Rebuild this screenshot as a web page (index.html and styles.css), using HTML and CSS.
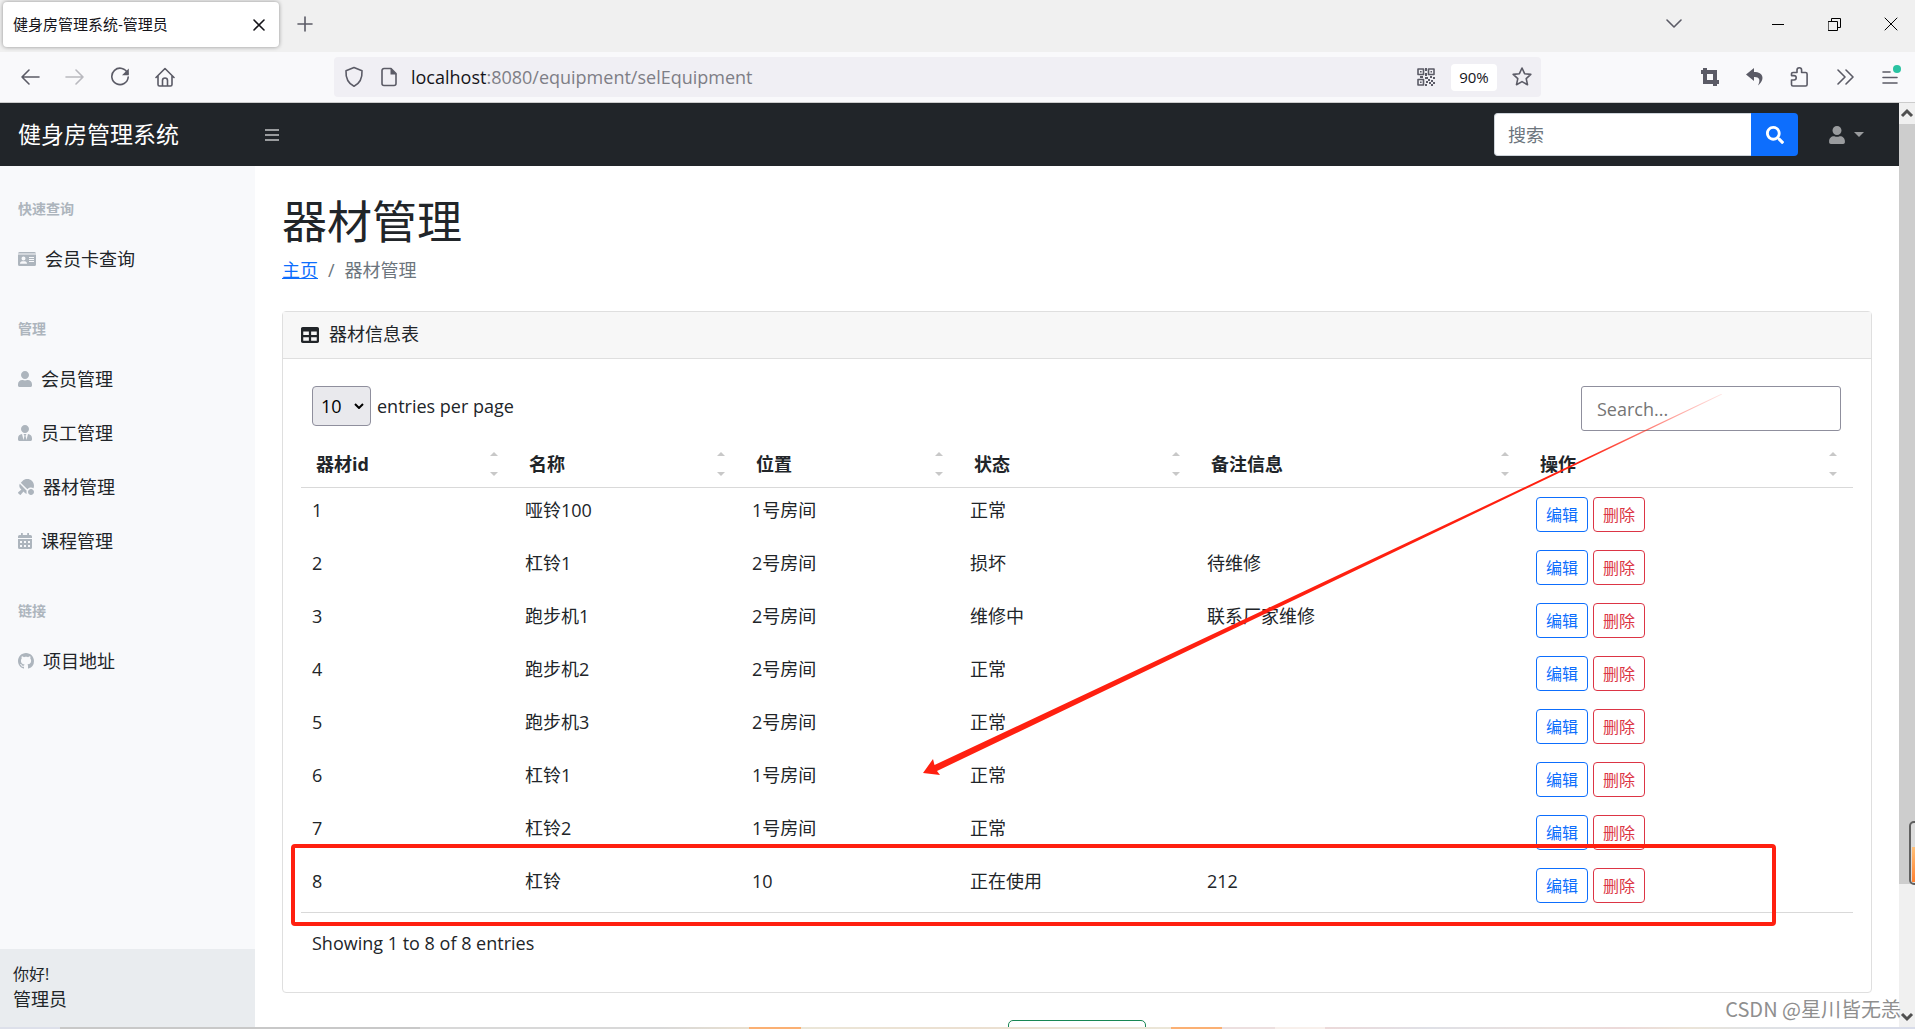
FILE: index.html
```html
<!DOCTYPE html>
<html lang="zh-CN">
<head>
<meta charset="utf-8">
<meta name="viewport" content="width=device-width, initial-scale=1">
<title>健身房管理系统-管理员</title>
<link rel="stylesheet" href="styles.css">
</head>
<body>
<svg class="defs" aria-hidden="true">
  <symbol id="i-user" viewBox="0 0 448 512"><path d="M224 256c70.7 0 128-57.3 128-128S294.7 0 224 0 96 57.3 96 128s57.3 128 128 128zm89.6 32h-16.7c-22.2 10.2-46.9 16-72.9 16s-50.6-5.8-72.9-16h-16.7C60.2 288 0 348.2 0 422.4V464c0 26.500 21.500 48 48 48h352c26.500 0 48-21.500 48-48v-41.600c0-74.200-60.200-134.400-134.400-134.400z"/></symbol>
  <symbol id="i-sort" viewBox="0 0 8 26"><path d="M0 5L4 1l4 4zM0 21l4 4 4-4z"/></symbol>
</svg>

<div class="browser">
  <header class="tabbar">
    <div class="tab"><span>健身房管理系统-管理员</span>
      <button class="tab-close" aria-label="关闭标签页"><svg width="12" height="12" viewBox="0 0 12 12"><path d="M1 1l10 10M11 1L1 11"/></svg></button>
    </div>
    <button class="new-tab" aria-label="新标签页"><svg width="16" height="16" viewBox="0 0 16 16"><path d="M8 1v14M1 8h14"/></svg></button>
    <div class="window-controls">
      <button class="tab-list" aria-label="标签列表"><svg width="16" height="10" viewBox="0 0 16 10"><path d="M1 1l7 7 7-7"/></svg></button>
      <button aria-label="最小化"><svg width="12" height="12" viewBox="0 0 12 12"><path d="M0 6.500h12"/></svg></button>
      <button aria-label="还原"><svg width="13" height="13" viewBox="0 0 13 13"><path d="M.5 3.500h9v9h-9zM3.500 3.500v-3h9v9h-3"/></svg></button>
      <button class="last" aria-label="关闭"><svg width="14" height="14" viewBox="0 0 14 14"><path d="M1 1l12 12M13 1L1 13"/></svg></button>
    </div>
  </header>

  <nav class="toolbar" aria-label="浏览器工具栏">
    <button class="tool" aria-label="后退"><svg width="20" height="20" viewBox="0 0 20 20"><path d="M19 10H2M9 3l-7 7 7 7"/></svg></button>
    <button class="tool dim" aria-label="前进"><svg width="20" height="20" viewBox="0 0 20 20"><path d="M1 10h17M11 3l7 7-7 7"/></svg></button>
    <button class="tool" aria-label="刷新"><svg width="20" height="20" viewBox="0 0 20 20"><path d="M17.700 6.500A8.200 8.200 0 1 0 18.200 10"/><path class="solid" d="M18.800 1.500v6.800H12z"/></svg></button>
    <button class="tool" aria-label="主页"><svg width="20" height="20" viewBox="0 0 20 20"><path d="M1 10.500L10 1.500l9 9M3 9v8.500a1.500 1.500 0 0 0 1.500 1.500h11a1.500 1.500 0 0 0 1.500-1.500V9M7.500 19v-5.500a2.500 2.500 0 0 1 5 0V19"/></svg></button>
    <div class="urlbar">
      <svg width="20" height="22" viewBox="0 0 20 22"><path d="M10 1.500l8 3.200c.4 6.800-1.600 12.300-8 15.600C3.600 17 1.600 11.500 2 4.700z"/></svg>
      <svg class="page-icon" width="16" height="20" viewBox="0 0 16 20"><path d="M10 1.500H3A2 2 0 0 0 1 3.500v13a2 2 0 0 0 2 2h10a2 2 0 0 0 2-2V6.500z"/><path class="solid" d="M9.500 1v6.500H15.500z"/></svg>
      <span class="url"><b>localhost</b>:8080/equipment/selEquipment</span>
      <svg class="qr" width="18" height="18" viewBox="0 0 18 18"><path d="M1 1h5.500v5.500H1zM11.500 1H17v5.500h-5.500zM1 11.500h5.500V17H1z"/><path class="solid" d="M3 3h1.600v1.600H3zM13.500 3H15v1.600h-1.500zM3 13.500h1.600V15H3zM8 0h2v3H8zM8 5h2v3H8zM3 8h3v2H3zM8 9h3v2H8zM13 8h2v2h-2zM16 9h2v2h-2zM11 11h2v2h-2zM14 12h2v2h-2zM9 13h2v2H9zM12 14h2v2h-2zM16 14h2v2h-2zM8 16h2v2H8zM14 16h2v2h-2z"/></svg>
      <span class="zoom">90%</span>
      <svg width="22" height="22" viewBox="0 0 22 22"><path d="M11 2l2.600 5.700 6.200.7-4.600 4.200 1.300 6.100L11 15.600l-5.500 3.100 1.300-6.100L2.200 8.400l6.200-.7z"/></svg>
    </div>
    <button class="tool" aria-label="截图"><svg width="20" height="20" viewBox="0 0 20 20"><path class="heavy" d="M1 5h14v14M5 1v14h14"/></svg></button>
    <button class="tool" aria-label="撤销"><svg width="20" height="20" viewBox="0 0 20 20"><path class="solid" d="M9 1L1 7.500 9 14v-4c5-.3 7 2.500 4 8.500 7-5.500 6-13.500-4-13.500z"/></svg></button>
    <button class="tool" aria-label="扩展"><svg width="20" height="22" viewBox="0 0 20 22"><path d="M3 20a1.500 1.500 0 0 1-1.500-1.500V14H4a2.200 2.200 0 0 0 0-4.400H1.500V8A1.500 1.500 0 0 1 3 6.500h4V4a2.300 2.300 0 0 1 4.600 0v2.500h4A1.500 1.500 0 0 1 17.100 8v10.500a1.500 1.500 0 0 1-1.500 1.500z"/></svg></button>
    <button class="tool" aria-label="更多工具"><svg width="18" height="18" viewBox="0 0 18 18"><path d="M2 2l7 7-7 7M10 2l7 7-7 7"/></svg></button>
    <button class="tool" aria-label="菜单"><svg width="22" height="26" viewBox="0 0 22 26"><path d="M4 8h7M4 13.500h14M4 19h14"/><circle cx="18" cy="5" r="4" fill="#2ac3a2" stroke="none"/></svg></button>
  </nav>

  <div class="viewport">
    <div class="page">
      <nav class="topnav">
        <a class="brand" href="#">健身房管理系统</a>
        <button class="burger" aria-label="切换侧栏"><svg width="14" height="14" viewBox="0 0 14 14"><path d="M0 2h14M0 7h14M0 12h14"/></svg></button>
        <form class="nav-search">
          <input type="text" placeholder="搜索" aria-label="搜索">
          <button type="button" aria-label="提交搜索"><svg width="18" height="18" viewBox="0 0 512 512"><path d="M505 442.700L405.300 343c-4.500-4.500-10.600-7-17-7H372c27.600-35.300 44-79.700 44-128C416 93.100 322.900 0 208 0S0 93.100 0 208s93.100 208 208 208c48.300 0 92.700-16.400 128-44v16.300c0 6.400 2.500 12.500 7 17l99.700 99.700c9.400 9.400 24.600 9.400 33.900 0l28.300-28.300c9.400-9.400 9.400-24.600.1-34zM208 336c-70.700 0-128-57.200-128-128 0-70.700 57.200-128 128-128 70.700 0 128 57.200 128 128 0 70.700-57.200 128-128 128z"/></svg></button>
        </form>
        <button class="account" aria-label="账户"><svg width="16" height="18"><use href="#i-user"/></svg><svg width="10" height="5" viewBox="0 0 10 5"><path d="M0 0h10L5 5z"/></svg></button>
      </nav>

      <div class="layout">
        <aside class="sidebar">
          <div class="menu">
            <h2>快速查询</h2>
            <a href="#"><svg width="18" height="16" viewBox="0 0 18 16"><path fill-rule="evenodd" d="M1.500 1h15A1.500 1.500 0 0 1 18 2.500H0A1.500 1.500 0 0 1 1.500 1zM0 3.500h18v10a1.500 1.500 0 0 1-1.500 1.500h-15A1.500 1.500 0 0 1 0 13.500zM5.500 5.500a2 2 0 1 0 0 4 2 2 0 0 0 0-4zM2 12.800h7c0-1.600-.9-2.600-2.200-2.600H4.200C2.900 10.200 2 11.200 2 12.800zM11 6v1h5V6zM11 8v1h5V8zM11 10v1h5v-1z"/></svg>会员卡查询</a>
            <h2>管理</h2>
            <a href="#"><svg width="14" height="16"><use href="#i-user"/></svg>会员管理</a>
            <a href="#"><svg width="14" height="16" viewBox="0 0 448 512"><path d="M224 256c70.700 0 128-57.300 128-128S294.700 0 224 0 96 57.300 96 128s57.300 128 128 128zm95.800 32.600L272 480l-32-136 32-56h-96l32 56-32 136-47.800-191.400C56.900 292 0 350.300 0 422.400V464c0 26.500 21.500 48 48 48h352c26.500 0 48-21.500 48-48v-41.600c0-72.100-56.900-130.400-128.200-133.800z"/></svg>员工管理</a>
            <a href="#"><svg width="16" height="16" viewBox="0 0 512 512"><path d="M496.200 296.500C527.700 218.700 512 126.200 449 63.100 365.100-21 229-21 145.100 63.100l-56 56.100 211.500 211.500c46.100-62.100 131.500-77.400 195.600-34.200zm-217.900 79.700L57.900 155.900c-27.300 45.300-21.700 105 17.300 144.100l34.500 34.600L6.700 424c-8.600 7.500-9.100 20.700-1 28.800l53.400 53.500c8 8.100 21.200 7.600 28.700-1L177.100 402l35.700 35.700c19.700 19.700 44.600 30.500 70.300 33.300-7.100-17-11-35.600-11-55.100-.1-13.800 2.500-27 6.200-39.700zM416 320c-53 0-96 43-96 96s43 96 96 96 96-43 96-96-43-96-96-96z"/></svg>器材管理</a>
            <a href="#"><svg width="14" height="16" viewBox="0 0 14 16"><path fill-rule="evenodd" d="M3 0h1.800v2h4.400V0H11v2h1.500A1.500 1.500 0 0 1 14 3.500V5H0V3.500A1.500 1.500 0 0 1 1.500 2H3zM0 6h14v8.500a1.500 1.500 0 0 1-1.500 1.500h-11A1.500 1.500 0 0 1 0 14.500zM2 8v2h2V8zM6 8v2h2V8zM10 8v2h2V8zM2 12v2h2v-2zM6 12v2h2v-2zM10 12v2h2v-2z"/></svg>课程管理</a>
            <h2>链接</h2>
            <a href="#"><svg width="16" height="16" viewBox="0 0 16 16"><path d="M8 0C3.580 0 0 3.580 0 8c0 3.540 2.290 6.530 5.470 7.590.4.070.55-.17.55-.38 0-.19-.01-.82-.01-1.490-2.010.37-2.530-.49-2.690-.94-.09-.23-.48-.94-.82-1.130-.28-.15-.68-.52-.01-.53.63-.01 1.080.58 1.230.82.72 1.210 1.870.87 2.330.66.070-.52.280-.87.510-1.070-1.780-.2-3.640-.89-3.640-3.950 0-.87.310-1.590.820-2.150-.08-.2-.36-1.020.080-2.120 0 0 .67-.21 2.200.82.640-.18 1.320-.27 2-.27.680 0 1.360.090 2 .27 1.530-1.040 2.200-.82 2.200-.82.440 1.100.160 1.920.080 2.120.510.560.820 1.270.820 2.150 0 3.070-1.870 3.750-3.650 3.950.290.250.540.730.540 1.480 0 1.070-.01 1.930-.01 2.200 0 .210.150.460.550.380A8.013 8.013 0 0 0 16 8c0-4.420-3.580-8-8-8z"/></svg>项目地址</a>
          </div>
          <div class="greeting"><small>你好!</small><span>管理员</span></div>
        </aside>

        <main>
          <h1>器材管理</h1>
          <nav class="crumbs" aria-label="面包屑"><a href="#">主页</a><span>/</span><span>器材管理</span></nav>

          <section class="card">
            <header><svg width="18" height="16" viewBox="0 32 512 448" preserveAspectRatio="none"><path d="M464 32H48C21.500 32 0 53.500 0 80v352c0 26.500 21.500 48 48 48h416c26.500 0 48-21.500 48-48V80c0-26.500-21.500-48-48-48zM224 416H64v-96h160v96zm0-160H64v-96h160v96zm224 160H288v-96h160v96zm0-160H288v-96h160v96z"/></svg>器材信息表</header>
            <div class="card-body">
              <div class="table-top">
                <label class="per-page"><span class="select"><select><option>10</option></select><svg width="10" height="6" viewBox="0 0 10 6"><path d="M1 1l4 4 4-4"/></svg></span><span>entries per page</span></label>
                <input class="filter" type="text" placeholder="Search..." aria-label="Search">
              </div>
              <table>
                <colgroup><col class="c1"><col class="c2"><col class="c3"><col class="c4"><col class="c5"><col class="c6"></colgroup>
                <thead><tr>
                  <th><div>器材id<svg><use href="#i-sort"/></svg></div></th>
                  <th><div>名称<svg><use href="#i-sort"/></svg></div></th>
                  <th><div>位置<svg><use href="#i-sort"/></svg></div></th>
                  <th><div>状态<svg><use href="#i-sort"/></svg></div></th>
                  <th><div>备注信息<svg><use href="#i-sort"/></svg></div></th>
                  <th><div>操作<svg><use href="#i-sort"/></svg></div></th>
                </tr></thead>
                <tbody>
                  <tr><td>1</td><td>哑铃100</td><td>1号房间</td><td>正常</td><td></td><td><div class="actions"><button class="edit">编辑</button><button class="del">删除</button></div></td></tr>
                  <tr><td>2</td><td>杠铃1</td><td>2号房间</td><td>损坏</td><td>待维修</td><td><div class="actions"><button class="edit">编辑</button><button class="del">删除</button></div></td></tr>
                  <tr><td>3</td><td>跑步机1</td><td>2号房间</td><td>维修中</td><td>联系厂家维修</td><td><div class="actions"><button class="edit">编辑</button><button class="del">删除</button></div></td></tr>
                  <tr><td>4</td><td>跑步机2</td><td>2号房间</td><td>正常</td><td></td><td><div class="actions"><button class="edit">编辑</button><button class="del">删除</button></div></td></tr>
                  <tr><td>5</td><td>跑步机3</td><td>2号房间</td><td>正常</td><td></td><td><div class="actions"><button class="edit">编辑</button><button class="del">删除</button></div></td></tr>
                  <tr><td>6</td><td>杠铃1</td><td>1号房间</td><td>正常</td><td></td><td><div class="actions"><button class="edit">编辑</button><button class="del">删除</button></div></td></tr>
                  <tr><td>7</td><td>杠铃2</td><td>1号房间</td><td>正常</td><td></td><td><div class="actions"><button class="edit">编辑</button><button class="del">删除</button></div></td></tr>
                  <tr><td>8</td><td>杠铃</td><td>10</td><td>正在使用</td><td>212</td><td><div class="actions"><button class="edit">编辑</button><button class="del">删除</button></div></td></tr>
                </tbody>
              </table>
              <p class="info">Showing 1 to 8 of 8 entries</p>
            </div>
          </section>
          <button class="add" aria-label="添加器材"></button>
        </main>
      </div>
    </div>

    <div class="scrollbar" aria-hidden="true">
      <svg width="16" height="21" viewBox="0 0 16 21"><path d="M3 13l5-5 5 5"/></svg>
      <div class="thumb"></div>
      <svg class="down" width="16" height="21" viewBox="0 0 16 21"><path d="M3 8l5 5 5-5"/></svg>
    </div>
  </div>

  <div class="taskbar"></div>

  <div class="side-widget"><div></div></div>
  <div class="highlight"></div>
  <svg class="arrow" width="800" height="381" viewBox="0 0 800 381">
    <defs><linearGradient id="fade" gradientUnits="userSpaceOnUse" x1="600" y1="0" x2="800" y2="0"><stop offset="0" stop-color="#ff2010"/><stop offset=".3" stop-color="#ff2010"/><stop offset="1" stop-color="#ff2010" stop-opacity=".1"/></linearGradient></defs>
    <path fill="url(#fade)" d="M0 379l10-14 1.500 6L537 123.800 799 -.5v1L538 126 14 377l3 4z"/>
  </svg>
  <div class="watermark">CSDN @星川皆无恙</div>
</div>
</body>
</html>
```
FILE: styles.css
```css
* { box-sizing: border-box; }
body {
  margin: 0;
  font: 18px/27px "Open Sans", "Noto Sans CJK SC", sans-serif;
  color: #212529;
  background: #fff;
}
button, input, select { font: inherit; color: inherit; margin: 0; }
button { padding: 0; border: 0; background: none; }
svg { flex: none; display: block; }
.defs { position: absolute; width: 0; height: 0; }

.browser {
  position: relative;
  display: flex;
  flex-direction: column;
  height: 100vh;
  overflow: hidden;
}

/* Tab strip */
.tabbar {
  flex: none;
  display: flex;
  height: 52px;
  background: #f0f0f0;
}
.tabbar svg, .toolbar svg {
  fill: none;
  stroke: #5b5b66;
  stroke-width: 1.6;
  stroke-linecap: round;
  stroke-linejoin: round;
}
.tab {
  display: flex;
  align-items: center;
  justify-content: space-between;
  width: 276px;
  height: 45px;
  margin: 2px 0 0 3px;
  padding: 0 14px 0 10px;
  border-radius: 4px;
  background: #fff;
  box-shadow: 0 0 4px rgba(0, 0, 0, .4);
  color: #15141a;
  font-size: 15px;
}
.tab-close svg { stroke: #15141a; }
.new-tab { width: 52px; height: 48px; display: flex; align-items: center; justify-content: center; }
.window-controls { display: flex; margin-left: auto; height: 48px; }
.window-controls button { display: flex; align-items: center; justify-content: center; width: 57px; }
.window-controls .tab-list { width: 40px; margin-right: 55px; }
.window-controls .last { width: 52px; padding-left: 4px; }
.window-controls button:not(.tab-list) svg { stroke: #000; stroke-width: 1; }

/* Address row */
.toolbar {
  flex: none;
  display: flex;
  align-items: center;
  height: 51px;
  padding: 0 3px 0 7px;
  background: #f9f9fb;
  border-bottom: 1px solid #ccc;
}
.tool { display: flex; align-items: center; justify-content: center; width: 45px; height: 45px; }
.tool.dim { opacity: .4; }
.toolbar .solid { fill: #5b5b66; stroke: none; }
.toolbar .heavy { stroke-width: 4; stroke-linecap: butt; stroke-linejoin: miter; }
.urlbar {
  flex: 1;
  display: flex;
  align-items: center;
  height: 40px;
  margin: 0 146px 0 147px;
  padding: 0 8px 0 10px;
  border-radius: 4px;
  background: #f0eff4;
}
.page-icon { margin: 0 14px 0 17px; }
.url { flex: 1; color: #7e7e86; }
.url b { font-weight: 400; color: #15141a; }
.zoom {
  margin: 0 14px 0 16px;
  width: 46px;
  border-radius: 4px;
  background: #fff;
  text-align: center;
  color: #15141a;
  font-size: 15px;
}

/* Page area */
.viewport { flex: 1; min-height: 0; display: flex; }
.page { flex: 1; min-width: 0; display: flex; flex-direction: column; overflow: hidden; }
.topnav {
  flex: none;
  display: flex;
  align-items: center;
  height: 63px;
  background: #212529;
}
.brand { width: 255px; padding-left: 18px; color: #fff; font-size: 23px; text-decoration: none; }
.burger { padding: 10px; }
.burger svg { stroke: #9a9c9e; stroke-width: 2; }
.nav-search { display: flex; margin-left: auto; }
.nav-search input {
  width: 257px;
  height: 43px;
  padding: 0 13px;
  border: 1px solid #ced4da;
  border-right: 0;
  border-radius: 4px 0 0 4px;
  background: #fff;
}
.nav-search input::placeholder { color: #6c757d; opacity: 1; }
.nav-search button {
  display: flex;
  align-items: center;
  justify-content: center;
  width: 47px;
  border-radius: 0 4px 4px 0;
  background: #0d6efd;
}
.nav-search svg { fill: #fff; }
.account { display: flex; align-items: center; gap: 9px; margin: 0 35px 0 31px; }
.account svg { fill: #9a9c9e; }

.layout { flex: 1; min-height: 0; display: flex; }
.sidebar {
  flex: none;
  display: flex;
  flex-direction: column;
  width: 255px;
  background: #f8f9fb;
}
.menu { flex: 1; }
.menu h2 {
  margin: 0;
  padding: 33px 18px 13px;
  color: #adb5bd;
  font-size: 14px;
  line-height: 20px;
  font-weight: 700;
}
.menu a {
  display: flex;
  align-items: center;
  gap: 9px;
  height: 54px;
  padding: 0 18px;
  color: #212529;
  text-decoration: none;
}
.menu svg { fill: #adb5bd; }
.greeting { display: flex; flex-direction: column; height: 78px; padding: 13px; background: #e9ecef; }
.greeting small { font-size: 16px; line-height: 24px; }

main { flex: 1; min-width: 0; display: flex; flex-direction: column; padding: 27px 27px 0; }
h1 { margin: 0 0 6px; font-size: 45px; line-height: 58px; font-weight: 400; }
.crumbs { display: flex; gap: 10px; margin-bottom: 27px; color: #6c757d; }
.crumbs a { color: #0d6efd; }

.card { flex: none; border: 1px solid #dfdfdf; border-radius: 4px; }
.card header {
  display: flex;
  align-items: center;
  gap: 10px;
  padding: 9px 18px 10px;
  border-bottom: 1px solid #dfdfdf;
  background: #f7f7f7;
}
.card header svg { fill: #212529; }
.card-body { padding: 18px 18px 27px; }
.table-top { display: flex; justify-content: space-between; padding: 9px 12px 9px 11px; }
.per-page { display: flex; align-items: center; gap: 6px; height: 40px; }
.select { position: relative; }
.select select {
  display: block;
  appearance: none;
  width: 59px;
  height: 40px;
  padding: 0 8px;
  border: 1px solid #8f8f9d;
  border-radius: 4px;
  background: #e9e9ed;
  color: #000;
}
.select svg { position: absolute; right: 7px; top: 17px; fill: none; stroke: #000; stroke-width: 2; pointer-events: none; }
.filter {
  width: 260px;
  height: 45px;
  padding: 0 15px;
  border: 1px solid #8f8f9d;
  border-radius: 3px;
  background: #fff;
}
.filter::placeholder { color: #757575; opacity: 1; }

table { width: 100%; table-layout: fixed; border-collapse: separate; border-spacing: 0; border-bottom: 1px solid #d9d9d9; }
.c1 { width: 213px; }
.c2 { width: 227px; }
.c3 { width: 218px; }
.c4 { width: 237px; }
.c5 { width: 329px; }
.c6 { width: 328px; }
th { height: 48px; padding: 1px 16px 0 15px; border-bottom: 1px solid #d9d9d9; text-align: left; font-weight: 700; }
th div { display: flex; align-items: center; justify-content: space-between; }
th svg { width: 8px; height: 26px; fill: #c8c8c8; }
td { height: 53px; padding: 9px 11px; vertical-align: top; }
.actions { display: flex; gap: 5px; }
.actions button {
  width: 52px;
  height: 35px;
  border: 1px solid;
  border-radius: 4px;
  font-size: 16px;
  line-height: 24px;
}
.edit { color: #0d6efd; }
.del { color: #dc3545; }
.info { margin: 17px 11px 8px; }
.add {
  flex: none;
  align-self: center;
  width: 138px;
  height: 43px;
  margin-top: 27px;
  border: 1px solid #198754;
  border-radius: 5px;
}

.scrollbar { flex: none; display: flex; flex-direction: column; width: 16px; background: #f0f0f0; }
.scrollbar svg { fill: none; stroke: #505050; stroke-width: 3; }
.thumb { flex: 760; background: #cdcdcd; }
.scrollbar::after { content: ""; flex: 122; order: 1; }
.scrollbar .down { order: 2; }

.taskbar {
  flex: none;
  height: 2px;
  background: linear-gradient(90deg, #dde0ea 0 60px, #c8c8c8 60px 420px, #d8d8d8 420px 660px, #e8dfcf 749px, #fbb073 749px 801px, #ebe6d8 801px, #ebdfd0 970px, #ebe6d8 1171px, #fbb073 1171px 1222px, #ecdfdf 1222px 1275px, #f8f0ec 1275px 1325px, #ecd9d9 1325px, #dfe0e6 1430px, #eadfdb 1560px, #ecd9d9 1620px, #ebe4d8 1690px, #e0e2e4 1750px, #d8dcea);
}

/* Marks drawn over the page */
.side-widget {
  position: absolute;
  right: -8px;
  top: 821px;
  width: 14px;
  height: 64px;
  padding: 24px 1px 1px;
  border: 2px solid #606060;
  border-radius: 5px;
  background: #dcdcdc;
}
.side-widget div { height: 100%; background: linear-gradient(#ffc078, #ff8030); }
.highlight {
  position: absolute;
  left: 291px;
  top: 844px;
  width: 1485px;
  height: 82px;
  border: 4px solid #ff2010;
  border-radius: 4px;
}
.arrow { position: absolute; left: 923px; top: 394px; }
.watermark {
  position: absolute;
  right: 14px;
  bottom: 6px;
  color: #8f8f8f;
  font: 20px/28px "Noto Sans CJK SC", sans-serif;
}
```
